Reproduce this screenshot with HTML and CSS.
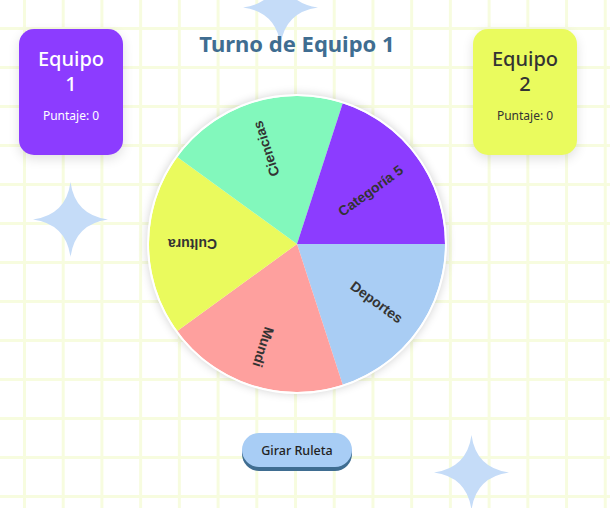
FILE: index.html
```html
<!DOCTYPE html>
<html lang="es">
<head>
<meta charset="utf-8">
<title>Ruleta</title>
<link rel="stylesheet" href="styles.css">
</head>
<body>
<svg class="star star-top" viewBox="0 0 100 100"><path d="M50 0Q56 44 100 50Q56 56 50 100Q44 56 0 50Q44 44 50 0Z"/></svg>
<svg class="star star-left" viewBox="0 0 100 100"><path d="M50 0Q56 44 100 50Q56 56 50 100Q44 56 0 50Q44 44 50 0Z"/></svg>
<svg class="star star-bottom" viewBox="0 0 100 100"><path d="M50 0Q56 44 100 50Q56 56 50 100Q44 56 0 50Q44 44 50 0Z"/></svg>

<main class="page">
  <section class="team team-1">
    <h3 class="team-name">Equipo 1</h3>
    <p class="team-score">Puntaje: 0</p>
  </section>

  <section class="center">
    <h1 class="turn">Turno de Equipo 1</h1>
    <div class="wheel">
      <svg class="wheel-svg" viewBox="0 0 296 296" width="296" height="296">
        <g transform="translate(148 148)">
          <path d="M0 0L148 0A148 148 0 0 1 45.73 140.76Z" fill="#a9cdf4"/>
          <path d="M0 0L45.73 140.76A148 148 0 0 1 -119.74 87Z" fill="#fea09e"/>
          <path d="M0 0L-119.74 87A148 148 0 0 1 -119.74 -87Z" fill="#eafa5d"/>
          <path d="M0 0L-119.74 -87A148 148 0 0 1 45.73 -140.76Z" fill="#82f8bc"/>
          <path d="M0 0L45.73 -140.76A148 148 0 0 1 148 0Z" fill="#8c3cff"/>
          <g class="labels">
            <text transform="rotate(36)" x="129" y="5">Deportes</text>
            <text transform="rotate(108)" x="129" y="5">Mundi</text>
            <text transform="rotate(180)" x="129" y="5">Cultura</text>
            <text transform="rotate(252)" x="129" y="5">Ciencias</text>
            <text transform="rotate(324)" x="129" y="5">Categoría 5</text>
          </g>
        </g>
      </svg>
    </div>
    <button class="spin" type="button">Girar Ruleta</button>
  </section>

  <section class="team team-2">
    <h3 class="team-name">Equipo 2</h3>
    <p class="team-score">Puntaje: 0</p>
  </section>
</main>
</body>
</html>
```
FILE: styles.css
```css
html, body {
  margin: 0;
  padding: 0;
}
body {
  width: 610px;
  height: 508px;
  overflow: hidden;
  position: relative;
  font-family: "Noto Sans", "Open Sans", sans-serif;
  background-color: #ffffff;
  background-image:
    linear-gradient(90deg, #f7fcdf 3px, transparent 3px),
    linear-gradient(180deg, #f7fcdf 3px, transparent 3px);
  background-size: 38.73px 39px;
  background-position: 23px 27px;
}

.star {
  position: absolute;
  width: 75px;
  height: 75px;
  fill: #c5dcf8;
  z-index: 0;
}
.star-top { left: 243px; top: -30px; }
.star-left { left: 33px; top: 182px; }
.star-bottom { left: 434px; top: 435px; }

.page {
  position: relative;
  z-index: 1;
  display: flex;
  justify-content: space-between;
  align-items: flex-start;
  padding: 29px 33px 0 19px;
}

.team {
  width: 104px;
  height: 126px;
  box-sizing: border-box;
  border-radius: 15px;
  padding-top: 18px;
  text-align: center;
  box-shadow: 0 4px 12px rgba(0, 0, 0, 0.12);
}
.team-1 { background: #8c3cff; color: #ffffff; }
.team-2 { background: #eafb5e; color: #333333; }

.team-name {
  margin: 0 auto;
  width: 80px;
  font-size: 20px;
  line-height: 24.5px;
  font-weight: 500;
}
.team-score {
  margin: 12px 0 0;
  font-size: 12px;
  line-height: 16px;
}

.center {
  flex: 1;
  display: flex;
  flex-direction: column;
  align-items: center;
  padding-right: 2px;
}

.turn {
  margin: 0;
  font-size: 22px;
  line-height: 28px;
  font-weight: 700;
  color: #3f6d91;
}

.wheel {
  margin-top: 37px;
  width: 296px;
  height: 296px;
  border: 2px solid #ffffff;
  border-radius: 50%;
  box-shadow: 0 0 10px rgba(0, 0, 0, 0.18);
  overflow: hidden;
  background: #ffffff;
}
.wheel-svg {
  display: block;
}
.labels text {
  font-family: "Liberation Sans", Arial, sans-serif;
  font-weight: 700;
  font-size: 14px;
  fill: #333333;
  text-anchor: end;
}

.spin {
  margin-top: 39px;
  height: 34px;
  padding: 0 19px;
  border: none;
  border-radius: 17px;
  background: #a8cdf5;
  color: #222222;
  font-family: "Noto Sans", "Open Sans", sans-serif;
  font-size: 12.5px;
  font-weight: 500;
  box-shadow: 0 4px 0 #3f6d91;
}
```
